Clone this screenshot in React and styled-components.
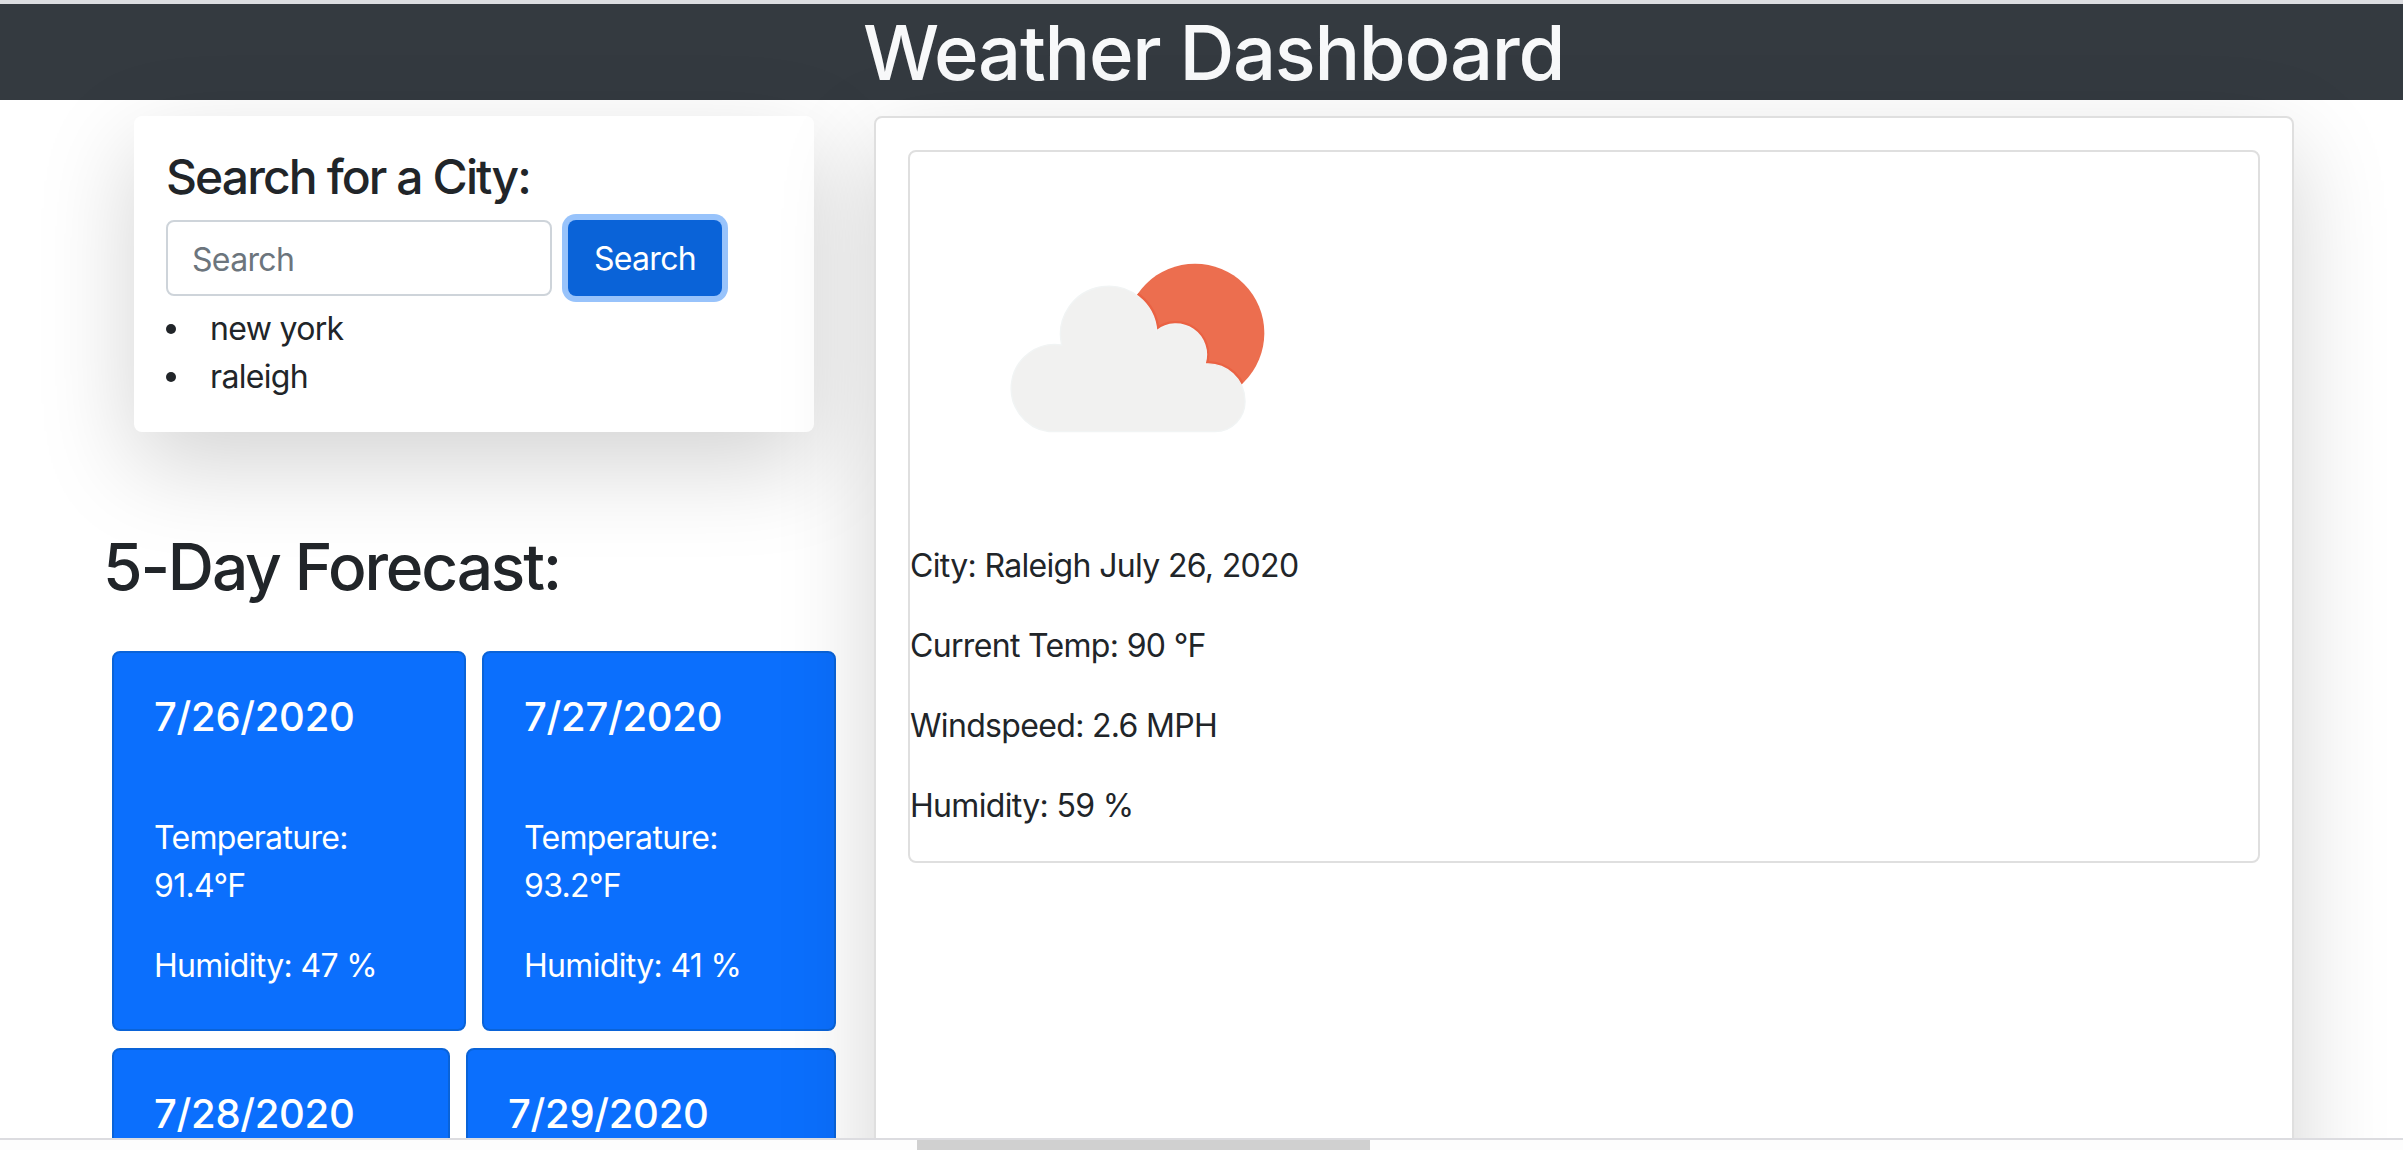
import React from 'react';
import styled, { createGlobalStyle } from 'styled-components';

const GlobalStyle = createGlobalStyle`
  html, body {
    margin: 0;
    height: 100%;
    overflow: hidden;
    background: #fff;
  }
  body {
    font-family: Inter, "Liberation Sans", sans-serif;
    font-size: 32px;
    line-height: 48px;
    letter-spacing: -0.67px;
    color: #212529;
  }
`;

const Page = styled.div`
  height: 1150px;
  display: flex;
  flex-direction: column;
  overflow: hidden;
`;

const TopEdge = styled.div`
  height: 4px;
  flex: none;
  background: #dcdde1;
`;

const Header = styled.header`
  height: 96px;
  flex: none;
  padding-left: 24px;
  box-sizing: border-box;
  background: #343a40;
  color: #f8f9fa;
  text-align: center;
`;

const Title = styled.h1`
  margin: 0;
  font-size: 76px;
  font-weight: 500;
  line-height: 96px;
  letter-spacing: -1.3px;
`;

const Main = styled.main`
  flex: 1;
  min-height: 0;
  display: flex;
  padding-top: 16px;
`;

const LeftColumn = styled.section`
  flex: 0 0 874px;
`;

const SearchCard = styled.div`
  width: 680px;
  height: 316px;
  margin-left: 134px;
  padding: 32px 32px 0;
  box-sizing: border-box;
  background: #fff;
  border-radius: 8px;
  box-shadow: 0 32px 96px rgba(0, 0, 0, 0.175);
`;

const SearchTitle = styled.h4`
  margin: 0 0 14px;
  font-size: 48px;
  font-weight: 500;
  line-height: 58px;
  letter-spacing: -1.9px;
`;

const SearchRow = styled.form`
  display: flex;
  gap: 16px;
`;

const SearchInput = styled.input`
  width: 386px;
  height: 76px;
  padding: 2px 24px 0;
  box-sizing: border-box;
  border: 2px solid #ced4da;
  border-radius: 8px;
  font: inherit;
  letter-spacing: inherit;
  color: #212529;

  &::placeholder {
    color: #6c757d;
    opacity: 1;
  }
`;

const SearchButton = styled.button`
  width: 154px;
  height: 76px;
  padding: 2px 0 0;
  border: 0;
  border-radius: 8px;
  background: #0a63d8;
  color: #fff;
  font: inherit;
  letter-spacing: inherit;
  box-shadow: 0 0 0 6px #98c3fb;
`;

const CityList = styled.ul`
  margin: 9px 0 0;
  padding: 0;
  list-style: none;
`;

const CityItem = styled.li`
  display: flex;
  align-items: center;

  &::before {
    content: '';
    flex: none;
    width: 10px;
    height: 10px;
    margin-right: 34px;
    border-radius: 50%;
    background: #212529;
  }
`;

const ForecastTitle = styled.h2`
  margin: 96px 0 46px 103px;
  font-size: 64px;
  font-weight: 500;
  line-height: 77px;
  letter-spacing: -2.15px;
`;

const ForecastRow = styled.div`
  display: grid;
  grid-template-columns: ${(p) => p.$columns};
  gap: 16px;
  width: 724px;
  margin: 0 0 17px 112px;
`;

const ForecastCard = styled.article`
  height: 380px;
  padding: 40px;
  box-sizing: border-box;
  background: #0b6ffd;
  border: 2px solid #0a63d8;
  border-radius: 8px;
  color: #fff;
`;

const ForecastDate = styled.h5`
  margin: 0 0 73px;
  font-size: 40px;
  font-weight: 500;
  line-height: 48px;
  letter-spacing: -0.3px;
`;

const ForecastText = styled.p`
  margin: 0 0 32px;
`;

const WeatherCard = styled.section`
  flex: 0 0 1420px;
  height: 1100px;
  padding: 32px;
  box-sizing: border-box;
  background: #fff;
  border: 2px solid #dfdfdf;
  border-radius: 8px;
  box-shadow: 0 32px 96px rgba(0, 0, 0, 0.175);
`;

const CurrentPanel = styled.div`
  height: 713px;
  box-sizing: border-box;
  border: 2px solid #dfdfdf;
  border-radius: 8px;
`;

const WeatherIcon = styled.svg`
  display: block;
  width: 400px;
  height: 390px;
`;

const CurrentText = styled.p`
  margin: 0 0 32px;
`;

const ScrollTrack = styled.div`
  position: relative;
  height: 12px;
  flex: none;
  box-sizing: border-box;
  border-top: 2px solid #dcdce0;
  background: #fdfdfd;
`;

const ScrollThumb = styled.div`
  width: 453px;
  height: 100%;
  margin-left: 917px;
  background: #d0d0d0;
`;

const CLOUD =
  'M505 998A129 129 0 0 1 545 738A144.5 144.5 0 1 1 830 695A92 92 0 0 1 975 795A112 112 0 0 1 1095 905A90 90 0 0 1 1005 998Z';

function CloudSunIcon() {
  return (
    <WeatherIcon viewBox="90 159 1200 1170" role="img" aria-label="few clouds">
      <defs>
        <clipPath id="sun-clip">
          <circle cx="945" cy="702" r="208" />
        </clipPath>
      </defs>
      <circle cx="945" cy="702" r="208" fill="#ec6e4f" />
      <path d={CLOUD} fill="none" stroke="#ea6243" strokeWidth="18" clipPath="url(#sun-clip)" />
      <path d={CLOUD} fill="#f1f1f0" stroke="#f1f4f4" strokeWidth="4" />
    </WeatherIcon>
  );
}

const row1 = [
  { date: '7/26/2020', temp: '91.4°F', humidity: '47 %' },
  { date: '7/27/2020', temp: '93.2°F', humidity: '41 %' },
];

const row2 = ['7/28/2020', '7/29/2020'];

export default function App() {
  return (
    <>
      <GlobalStyle />
      <Page>
        <TopEdge />
        <Header>
          <Title>Weather Dashboard</Title>
        </Header>
        <Main>
          <LeftColumn>
            <SearchCard>
              <SearchTitle>Search for a City:</SearchTitle>
              <SearchRow onSubmit={(e) => e.preventDefault()}>
                <SearchInput type="text" placeholder="Search" />
                <SearchButton type="submit">Search</SearchButton>
              </SearchRow>
              <CityList>
                <CityItem>new york</CityItem>
                <CityItem>raleigh</CityItem>
              </CityList>
            </SearchCard>
            <ForecastTitle>5-Day Forecast:</ForecastTitle>
            <ForecastRow $columns="354px 354px">
              {row1.map((day) => (
                <ForecastCard key={day.date}>
                  <ForecastDate>{day.date}</ForecastDate>
                  <ForecastText>
                    Temperature:
                    <br />
                    {day.temp}
                  </ForecastText>
                  <ForecastText>Humidity: {day.humidity}</ForecastText>
                </ForecastCard>
              ))}
            </ForecastRow>
            <ForecastRow $columns="338px 370px">
              {row2.map((date) => (
                <ForecastCard key={date}>
                  <ForecastDate>{date}</ForecastDate>
                </ForecastCard>
              ))}
            </ForecastRow>
          </LeftColumn>
          <WeatherCard>
            <CurrentPanel>
              <CloudSunIcon />
              <CurrentText>City: Raleigh July 26, 2020</CurrentText>
              <CurrentText>Current Temp: 90 °F</CurrentText>
              <CurrentText>Windspeed: 2.6 MPH</CurrentText>
              <CurrentText>Humidity: 59 %</CurrentText>
            </CurrentPanel>
          </WeatherCard>
        </Main>
        <ScrollTrack>
          <ScrollThumb />
        </ScrollTrack>
      </Page>
    </>
  );
}
